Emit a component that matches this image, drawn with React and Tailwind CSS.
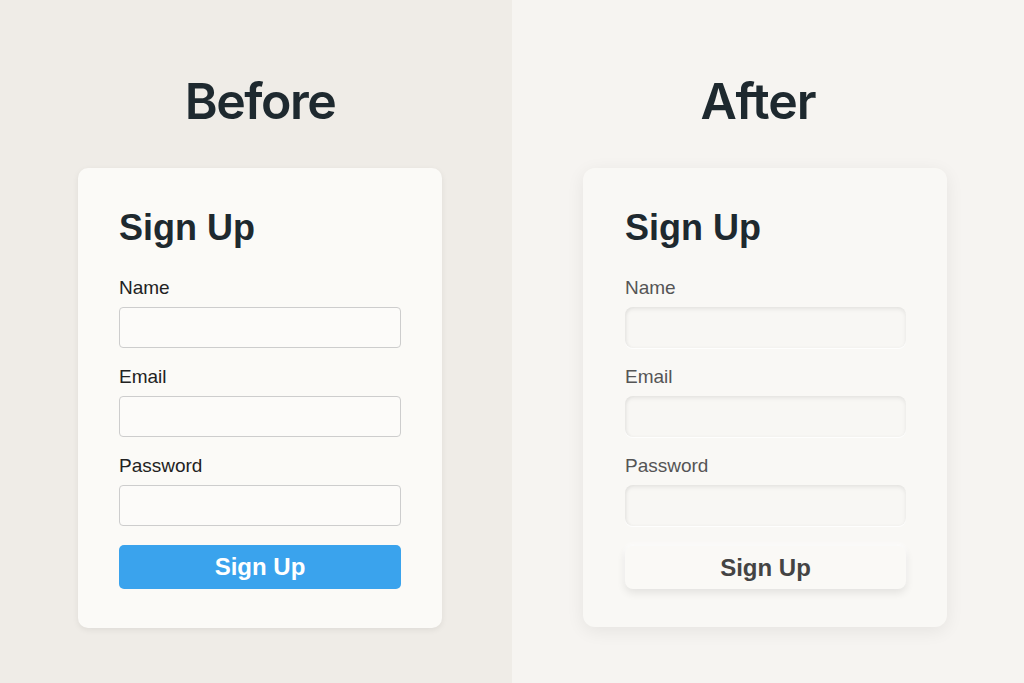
export default function App() {
  const font = { fontFamily: '"Liberation Sans", Arial, sans-serif' };
  const titleFont = { fontFamily: 'Inter, "Liberation Sans", Arial, sans-serif' };
  const fields = ["Name", "Email", "Password"];
  return (
    <div className="flex w-full h-[683px] overflow-hidden" style={font}>
      {/* Before */}
      <div className="w-[512px] h-full bg-[#efece7] pl-[78px] pt-[76px]">
        <div className="w-[364px] text-center text-[50px] leading-[50px] font-semibold text-[#1e292f] tracking-[-1.5px]" style={titleFont}>
          Before
        </div>
        <div className="mt-[42px] w-[364px] rounded-[10px] bg-[#fbfaf7] shadow-[0_2px_6px_rgba(0,0,0,0.07)] px-[41px] pt-[38px] pb-[39px]">
          <div className="text-[36px] leading-[44px] font-bold text-[#1e292f] mb-[27px]">Sign Up</div>
          <div className="flex flex-col gap-[18px]">
            {fields.map((f) => (
              <div key={f}>
                <div className="text-[19px] leading-[22px] text-[#222] mb-[8px]">{f}</div>
                <div className="h-[41px] w-full rounded-[4px] border border-[#cdcdcd] bg-[#fcfbf9]" />
              </div>
            ))}
          </div>
          <div className="mt-[19px] h-[44px] w-full rounded-[5px] bg-[#3aa3ed] flex items-center justify-center text-white text-[24px] font-bold">
            Sign Up
          </div>
        </div>
      </div>
      {/* After */}
      <div className="w-[512px] h-full bg-[#f6f4f1] pl-[71px] pt-[76px]">
        <div className="w-[364px] pr-[14px] text-center text-[50px] leading-[50px] font-semibold text-[#1e292f] tracking-[-1px]" style={titleFont}>
          After
        </div>
        <div className="mt-[42px] w-[364px] rounded-[12px] bg-[#f9f8f5] shadow-[0_4px_18px_rgba(0,0,0,0.07)] pl-[42px] pr-[41px] pt-[38px] pb-[38px]">
          <div className="text-[36px] leading-[44px] font-bold text-[#1e292f] mb-[27px]">Sign Up</div>
          <div className="flex flex-col gap-[18px]">
            {fields.map((f) => (
              <div key={f}>
                <div className="text-[19px] leading-[22px] text-[#555555] mb-[8px]">{f}</div>
                <div className="h-[41px] w-full rounded-[8px] bg-[#f8f7f4] shadow-[inset_0_2px_4px_rgba(0,0,0,0.08),inset_2px_0_3px_rgba(0,0,0,0.03),0_1px_1px_rgba(255,255,255,0.9)]" />
              </div>
            ))}
          </div>
          <div className="mt-[20px] h-[43px] w-full rounded-[8px] bg-[#faf9f6] shadow-[0_4px_8px_rgba(0,0,0,0.09),0_-2px_4px_rgba(255,255,255,0.9)] flex items-center justify-center text-[#444444] text-[24px] font-bold">
            Sign Up
          </div>
        </div>
      </div>
    </div>
  );
}
